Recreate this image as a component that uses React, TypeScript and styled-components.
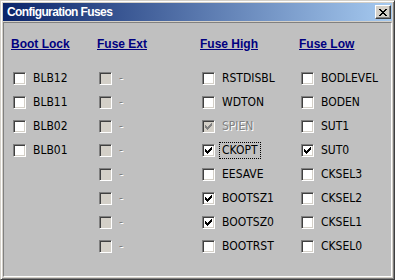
import React from "react";
import styled, { createGlobalStyle } from "styled-components";

const GlobalStyle = createGlobalStyle`
  html, body { margin: 0; padding: 0; background: #d4d0c8; }
  * { box-sizing: border-box; }
`;

const Window = styled.div`
  width: 395px;
  height: 280px;
  background: #d4d0c8;
  border: 1px solid;
  border-color: #d4d0c8 #404040 #404040 #d4d0c8;
  box-shadow: inset 1px 1px #fff, inset -1px -1px #808080;
  padding: 2px;
  display: flex;
  flex-direction: column;
  gap: 1px;
`;

const TitleBar = styled.div`
  height: 18px;
  flex: none;
  display: flex;
  align-items: center;
  justify-content: space-between;
  padding: 0 1px 0 4px;
  background: linear-gradient(to right, #0a246a, #a6caf0);
`;

const TitleText = styled.span`
  font-family: "Liberation Sans", Arial, sans-serif;
  font-weight: bold;
  font-size: 12px;
  letter-spacing: -0.6px;
  color: #fff;
  line-height: 14px;
`;

const CloseButton = styled.div`
  width: 16px;
  height: 14px;
  background: #d4d0c8;
  border: 1px solid;
  border-color: #fff #404040 #404040 #fff;
  box-shadow: inset -1px -1px #808080;
  padding: 2px 0 0 2px;
  display: flex;
  align-items: flex-start;
`;

const Client = styled.div`
  flex: 1;
  background: #c0c0c0;
  border: 1px solid;
  border-color: #808080 #fff #fff #808080;
  padding: 14px 0 0 7px;
  display: grid;
  grid-template-columns: 86px 103px 99px 1fr;
  align-items: start;
`;

const Column = styled.div`
  display: flex;
  flex-direction: column;
`;

const Header = styled.div`
  font-family: "Liberation Sans", Arial, sans-serif;
  font-weight: bold;
  font-size: 12px;
  line-height: 14px;
  color: #000080;
  text-decoration: underline;
  margin-bottom: 16px;
  white-space: nowrap;
`;

const Row = styled.div`
  height: 24px;
  display: flex;
  align-items: flex-start;
`;

const Box = styled.span<{ $disabled?: boolean }>`
  width: 13px;
  height: 13px;
  margin: 5px 0 0 2px;
  flex: none;
  border: 1px solid;
  border-color: #808080 #fff #fff #808080;
  box-shadow: inset 1px 1px #404040, inset -1px -1px #d4d0c8;
  background: ${(p) => (p.$disabled ? "#d4d0c8" : "#fff")};
  padding: 2px;
  display: flex;
`;

const Label = styled.span<{ $disabled?: boolean; $focused?: boolean }>`
  margin: 3px 0 0 4px;
  padding: 0 2px;
  border: 1px dotted ${(p) => (p.$focused ? "#000" : "transparent")};
  font-family: "DejaVu Sans Condensed", "DejaVu Sans", sans-serif;
  font-stretch: condensed;
  font-size: 12px;
  line-height: 15px;
  color: ${(p) => (p.$disabled ? "#808080" : "#000")};
  text-shadow: ${(p) => (p.$disabled ? "1px 1px #fff" : "none")};
  white-space: nowrap;
`;

const CHECK =
  "M6 0h1v1h-1z M5 1h2v1h-2z M0 2h1v1h-1z M4 2h3v1h-3z M0 3h2v1h-2z M3 3h3v1h-3z M0 4h5v1h-5z M1 5h3v1h-3z M2 6h1v1h-1z";

const CheckMark = ({ color }: { color: string }) => (
  <svg width="7" height="7" viewBox="0 0 7 7" shapeRendering="crispEdges">
    <path d={CHECK} fill={color} />
  </svg>
);

const CLOSE_X =
  "M0 0h2v1h-2z M6 0h2v1h-2z M1 1h2v1h-2z M5 1h2v1h-2z M2 2h4v1h-4z M3 3h2v1h-2z M2 4h4v1h-4z M1 5h2v1h-2z M5 5h2v1h-2z M0 6h2v1h-2z M6 6h2v1h-2z";

type Fuse = { name: string; checked?: boolean; disabled?: boolean; focused?: boolean };

const columns: { title: string; fuses: Fuse[] }[] = [
  {
    title: "Boot Lock",
    fuses: [{ name: "BLB12" }, { name: "BLB11" }, { name: "BLB02" }, { name: "BLB01" }],
  },
  {
    title: "Fuse Ext",
    fuses: Array.from({ length: 8 }, () => ({ name: "-", disabled: true })),
  },
  {
    title: "Fuse High",
    fuses: [
      { name: "RSTDISBL" },
      { name: "WDTON" },
      { name: "SPIEN", checked: true, disabled: true },
      { name: "CKOPT", checked: true, focused: true },
      { name: "EESAVE" },
      { name: "BOOTSZ1", checked: true },
      { name: "BOOTSZ0", checked: true },
      { name: "BOOTRST" },
    ],
  },
  {
    title: "Fuse Low",
    fuses: [
      { name: "BODLEVEL" },
      { name: "BODEN" },
      { name: "SUT1" },
      { name: "SUT0", checked: true },
      { name: "CKSEL3" },
      { name: "CKSEL2" },
      { name: "CKSEL1" },
      { name: "CKSEL0" },
    ],
  },
];

export default function App() {
  return (
    <>
      <GlobalStyle />
      <Window>
        <TitleBar>
          <TitleText>Configuration Fuses</TitleText>
          <CloseButton>
            <svg width="8" height="7" viewBox="0 0 8 7" shapeRendering="crispEdges" style={{ marginLeft: 1, marginTop: 1 }}>
              <path d={CLOSE_X} fill="#000" />
            </svg>
          </CloseButton>
        </TitleBar>
        <Client>
          {columns.map((col) => (
            <Column key={col.title}>
              <Header>{col.title}</Header>
              {col.fuses.map((f, i) => (
                <Row key={i}>
                  <Box $disabled={f.disabled}>
                    {f.checked && <CheckMark color={f.disabled ? "#808080" : "#000"} />}
                  </Box>
                  <Label $disabled={f.disabled} $focused={f.focused}>
                    {f.name}
                  </Label>
                </Row>
              ))}
            </Column>
          ))}
        </Client>
      </Window>
    </>
  );
}
